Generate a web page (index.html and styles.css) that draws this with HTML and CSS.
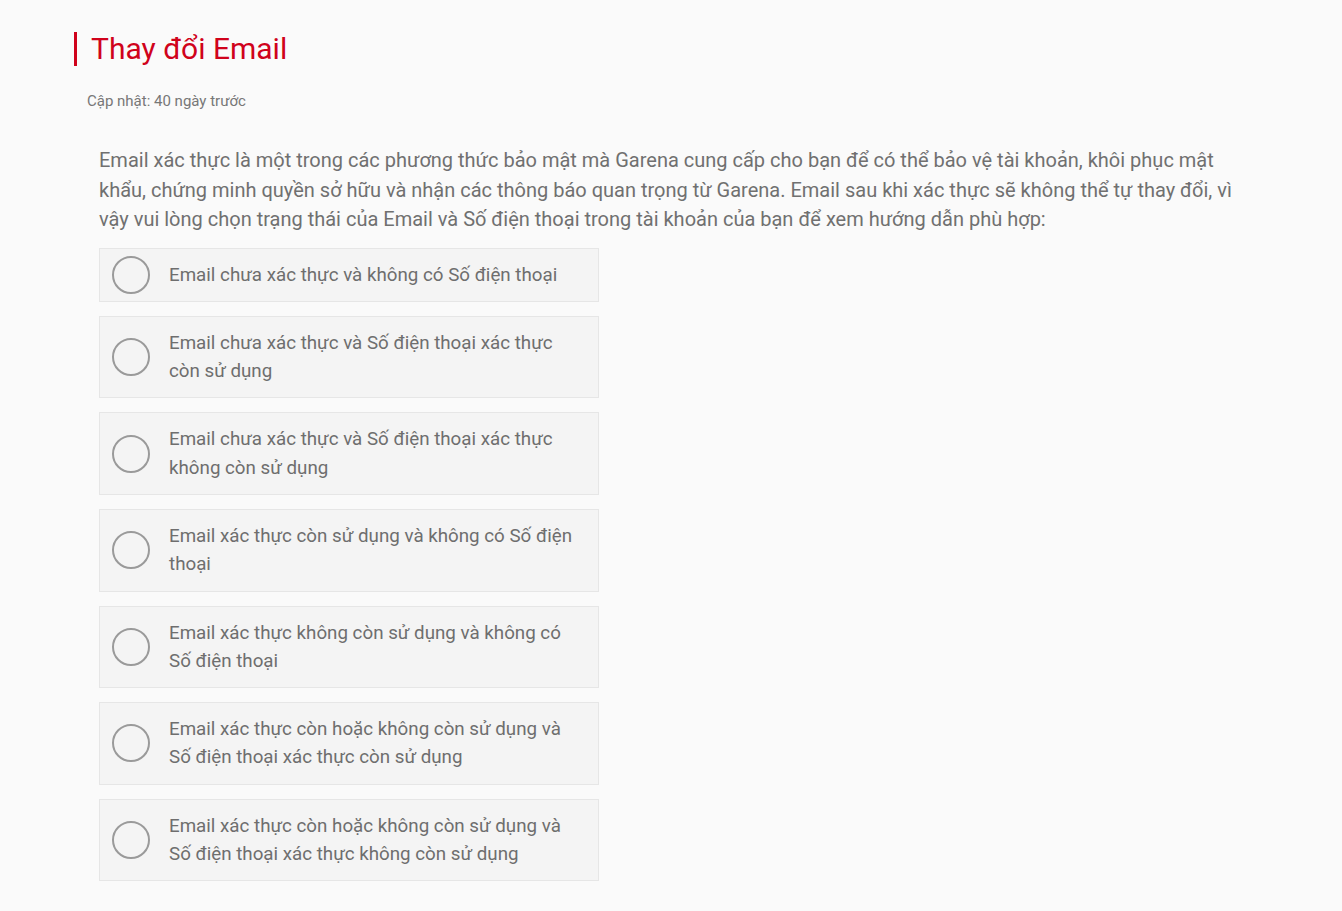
FILE: index.html
```html
<!DOCTYPE html>
<html lang="vi">
<head>
<meta charset="utf-8">
<title>Thay đổi Email</title>
<link rel="stylesheet" href="styles.css">
</head>
<body>
<main class="page">
  <h1 class="title">Thay đổi Email</h1>
  <div class="updated">Cập nhật: 40 ngày trước</div>
  <section class="content">
    <p class="intro">Email xác thực là một trong các phương thức bảo mật mà Garena cung cấp cho bạn để có thể bảo vệ tài khoản, khôi phục mật khẩu, chứng minh quyền sở hữu và nhận các thông báo quan trọng từ Garena. Email sau khi xác thực sẽ không thể tự thay đổi, vì vậy vui lòng chọn trạng thái của Email và Số điện thoại trong tài khoản của bạn để xem hướng dẫn phù hợp:</p>
    <ul class="options">
      <li class="option"><span class="radio"></span><span class="label">Email chưa xác thực và không có Số điện thoại</span></li>
      <li class="option"><span class="radio"></span><span class="label">Email chưa xác thực và Số điện thoại xác thực còn sử dụng</span></li>
      <li class="option"><span class="radio"></span><span class="label">Email chưa xác thực và Số điện thoại xác thực không còn sử dụng</span></li>
      <li class="option"><span class="radio"></span><span class="label">Email xác thực còn sử dụng và không có Số điện thoại</span></li>
      <li class="option"><span class="radio"></span><span class="label">Email xác thực không còn sử dụng và không có Số điện thoại</span></li>
      <li class="option"><span class="radio"></span><span class="label">Email xác thực còn hoặc không còn sử dụng và Số điện thoại xác thực còn sử dụng</span></li>
      <li class="option"><span class="radio"></span><span class="label">Email xác thực còn hoặc không còn sử dụng và Số điện thoại xác thực không còn sử dụng</span></li>
    </ul>
  </section>
</main>
</body>
</html>
```

FILE: styles.css
```css
html, body {
  margin: 0;
  padding: 0;
  background: #fafafa;
}
body {
  font-family: Roboto, "Noto Sans", Arial, sans-serif;
  color: #666;
}
.page {
  padding: 32px 0 30px 74px;
  width: 1180px;
}
.title {
  margin: 0;
  border-left: 3px solid #d0021b;
  padding-left: 14px;
  font-size: 30px;
  font-weight: 400;
  line-height: 34px;
  color: #d0021b;
}
.updated {
  margin: 25px 0 0 13px;
  font-size: 15px;
  line-height: 20px;
  color: #777;
}
.content {
  padding-left: 25px;
  margin-top: 35px;
}
.intro {
  margin: 0;
  font-size: 20px;
  line-height: 29.5px;
  color: #707070;
}
.options {
  list-style: none;
  margin: 13px 0 0;
  padding: 0;
  display: flex;
  flex-direction: column;
  gap: 14px;
}
.option {
  box-sizing: border-box;
  width: 500px;
  display: flex;
  align-items: center;
  gap: 19px;
  padding: 7px 20px 7px 12px;
  background: #f4f4f4;
  border: 1px solid #e6e6e6;
}
.radio {
  flex: none;
  box-sizing: border-box;
  width: 38px;
  height: 38px;
  border: 2px solid #9a9a9a;
  border-radius: 50%;
}
.label {
  padding: 5px 0;
  font-size: 18.75px;
  line-height: 28.3px;
  color: #6e6e6e;
}
```
